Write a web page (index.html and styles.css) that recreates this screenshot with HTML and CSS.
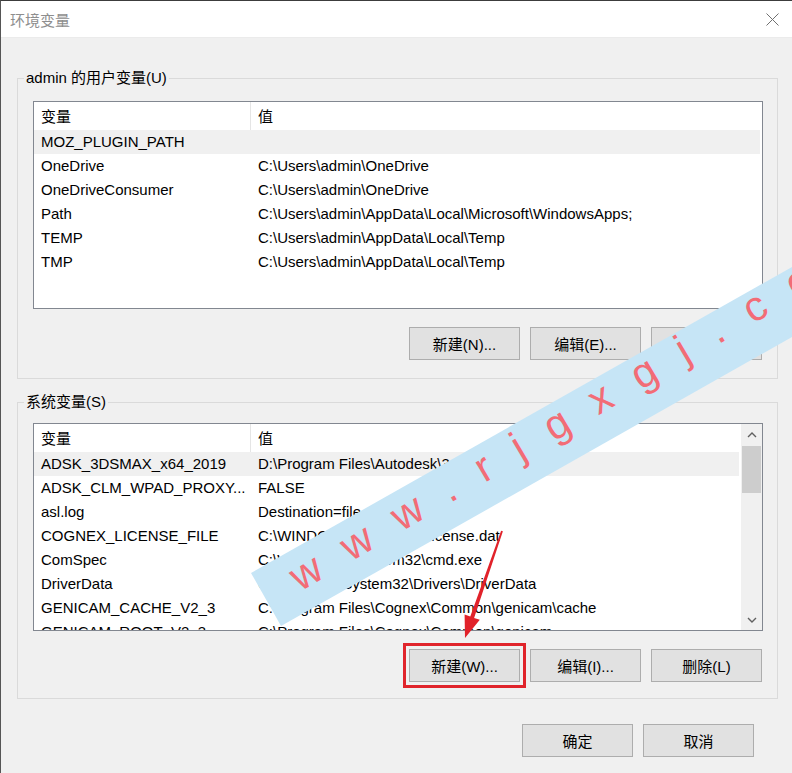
FILE: index.html
```html
<!DOCTYPE html>
<html lang="zh-CN">
<head>
<meta charset="utf-8">
<title>环境变量</title>
<link rel="stylesheet" href="styles.css">
</head>
<body>
<div class="window">
  <div class="titlebar">
    <span class="title">环境变量</span>
    <svg class="close" width="13" height="13" viewBox="0 0 13 13"><path class="close-x" d="M0.5 0.5 L12.5 12.5 M12.5 0.5 L0.5 12.5"/></svg>
  </div>
  <div class="body">
    <fieldset class="group g1">
      <legend>admin 的用户变量(U)</legend>
      <div class="list">
        <div class="lv-head"><div class="c1">变量</div><div class="c2">值</div></div>
        <div class="row sel"><span class="c1">MOZ_PLUGIN_PATH</span><span class="c2"></span></div>
        <div class="row"><span class="c1">OneDrive</span><span class="c2">C:\Users\admin\OneDrive</span></div>
        <div class="row"><span class="c1">OneDriveConsumer</span><span class="c2">C:\Users\admin\OneDrive</span></div>
        <div class="row"><span class="c1">Path</span><span class="c2">C:\Users\admin\AppData\Local\Microsoft\WindowsApps;</span></div>
        <div class="row"><span class="c1">TEMP</span><span class="c2">C:\Users\admin\AppData\Local\Temp</span></div>
        <div class="row"><span class="c1">TMP</span><span class="c2">C:\Users\admin\AppData\Local\Temp</span></div>
      </div>
      <div class="btns">
        <button class="btn">新建(N)...</button>
        <button class="btn">编辑(E)...</button>
        <button class="btn">删除(D)</button>
      </div>
    </fieldset>

    <fieldset class="group g2">
      <legend>系统变量(S)</legend>
      <div class="list scroll">
        <div class="lv-main">
          <div class="lv-head"><div class="c1">变量</div><div class="c2">值</div></div>
          <div class="row sel"><span class="c1">ADSK_3DSMAX_x64_2019</span><span class="c2">D:\Program Files\Autodesk\3ds Max 2019\</span></div>
          <div class="row"><span class="c1">ADSK_CLM_WPAD_PROXY...</span><span class="c2">FALSE</span></div>
          <div class="row"><span class="c1">asl.log</span><span class="c2">Destination=file</span></div>
          <div class="row"><span class="c1">COGNEX_LICENSE_FILE</span><span class="c2">C:\WINDOWS\System32\license.dat</span></div>
          <div class="row"><span class="c1">ComSpec</span><span class="c2">C:\WINDOWS\system32\cmd.exe</span></div>
          <div class="row"><span class="c1">DriverData</span><span class="c2">C:\Windows\System32\Drivers\DriverData</span></div>
          <div class="row"><span class="c1">GENICAM_CACHE_V2_3</span><span class="c2">C:\Program Files\Cognex\Common\genicam\cache</span></div>
          <div class="row"><span class="c1">GENICAM_ROOT_V2_3</span><span class="c2">C:\Program Files\Cognex\Common\genicam</span></div>
        </div>
        <div class="vscroll">
          <div class="sb-arrow"><svg width="10" height="6" viewBox="0 0 10 6"><path class="chev" d="M1 5 L5 1 L9 5"/></svg></div>
          <div class="sb-track"><div class="sb-thumb"></div></div>
          <div class="sb-arrow"><svg width="10" height="6" viewBox="0 0 10 6"><path class="chev" d="M1 1 L5 5 L9 1"/></svg></div>
        </div>
      </div>
      <div class="btns">
        <button class="btn marked">新建(W)...</button>
        <button class="btn">编辑(I)...</button>
        <button class="btn">删除(L)</button>
      </div>
    </fieldset>

    <div class="dlg-btns">
      <button class="btn">确定</button>
      <button class="btn">取消</button>
    </div>
  </div>

  <svg class="overlay" width="792" height="773" viewBox="0 0 792 773">
    <g transform="translate(251 573) rotate(-29.5)">
      <rect class="wm-band" x="0" y="0" width="720" height="61"/>
    </g>
    <text class="wm-text" transform="translate(300 592) rotate(-30.6)">www.rjgxgj.com</text>
    <polygon class="arrow" points="502.9,531.3 474.1,617.9 479.8,619.8 465,638 464.6,614.6 470.3,616.5 501.1,530.7"/>
  </svg>
</div>
</body>
</html>
```

FILE: styles.css
```css
html, body {
  margin: 0;
  padding: 0;
}
body {
  width: 792px;
  height: 773px;
  overflow: hidden;
  background: #f0f0f0;
  font-family: "Liberation Sans", "Noto Sans CJK SC", sans-serif;
  font-size: 15px;
  color: #000;
}
.window {
  position: relative;
  height: 773px;
  box-sizing: border-box;
  border-top: 1px solid #3c3c3c;
  border-left: 1px solid #555;
  background: #f0f0f0;
}
.titlebar {
  height: 37px;
  background: #fff;
  display: flex;
  align-items: center;
  justify-content: space-between;
  padding: 0 13px 0 9px;
  border-bottom: 1px solid #ebebeb;
  box-sizing: border-box;
}
.title {
  color: #8e8e8e;
  font-size: 15px;
}
.close-x {
  stroke: #707070;
  stroke-width: 1;
  fill: none;
}
.body {
  padding: 30px 14px 0 16px;
}
.group {
  margin: 0;
  border: 1px solid #dadada;
  min-width: 0;
  padding: 13px 14px 18px 15px;
}
.g2 {
  margin-top: 13px;
  padding-top: 11px;
  padding-bottom: 16px;
}
.group legend {
  padding: 0 2px;
  margin-left: -9px;
  line-height: 20px;
  height: 20px;
  font-size: 15px;
}
.list {
  height: 208px;
  box-sizing: border-box;
  border: 1px solid #828790;
  background: #fff;
  overflow: hidden;
}
.list.scroll {
  display: flex;
}
.lv-main {
  flex: 1;
  overflow: hidden;
}
.lv-head {
  display: flex;
  height: 28px;
  line-height: 29px;
}
.lv-head .c1 {
  border-right: 1px solid #e5e5e5;
}
.row {
  display: flex;
  height: 24px;
  line-height: 24px;
  white-space: nowrap;
}
.row.sel {
  background: #f0f0f0;
  margin-right: 2px;
}
.c1 {
  width: 217px;
  flex: none;
  box-sizing: border-box;
  padding-left: 7px;
  white-space: nowrap;
  overflow: hidden;
}
.c2 {
  padding-left: 7px;
  white-space: nowrap;
}
.vscroll {
  width: 21px;
  flex: none;
  background: #f0f0f0;
  display: flex;
  flex-direction: column;
}
.sb-arrow {
  height: 21px;
  display: flex;
  align-items: center;
  justify-content: center;
}
.chev {
  stroke: #606060;
  stroke-width: 1.4;
  fill: none;
}
.sb-track {
  flex: 1;
}
.sb-thumb {
  height: 47px;
  margin: 1px 1px 0 1px;
  background: #cdcdcd;
}
.btns {
  display: flex;
  justify-content: flex-end;
  gap: 10px;
  margin-top: 18px;
  padding-right: 1px;
}
.btn {
  width: 111px;
  height: 33px;
  box-sizing: border-box;
  border: 1px solid #adadad;
  background: #e1e1e1;
  font-family: inherit;
  font-size: 15px;
  color: #000;
  padding: 0;
  margin: 0;
}
.btn.marked {
  outline: 3px solid #e0242b;
  outline-offset: 3px;
}
.dlg-btns {
  display: flex;
  justify-content: flex-end;
  gap: 10px;
  margin-top: 25px;
  padding-right: 24px;
}
.overlay {
  position: absolute;
  left: -1px;
  top: -1px;
  pointer-events: none;
}
.wm-band {
  fill: #c6e5f6;
}
.wm-text {
  fill: #f26c76;
  font-family: "Liberation Sans", sans-serif;
  font-size: 42px;
  letter-spacing: 28.5px;
}
.arrow {
  fill: #e1222a;
}
```
